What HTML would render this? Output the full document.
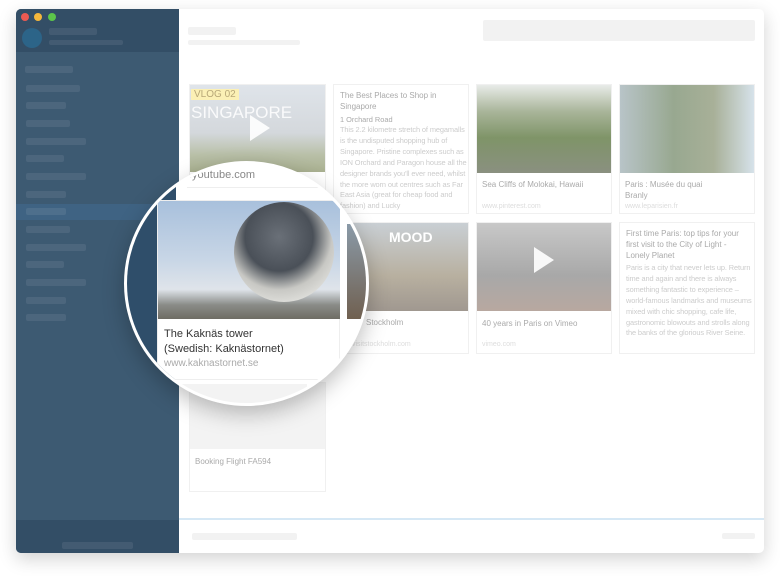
<!DOCTYPE html>
<html><head><meta charset="utf-8"><style>
*{margin:0;padding:0;box-sizing:border-box}
body{width:780px;height:576px;background:#fff;position:relative;overflow:hidden;font-family:"Liberation Sans",sans-serif}
.win{position:absolute;left:16px;top:9px;width:748px;height:544px;border-radius:5px;overflow:hidden;box-shadow:0 6px 18px rgba(0,0,0,.18);background:#fff}
.side{position:absolute;left:0;top:0;width:163px;height:544px;background:#3d5a72}
.sh{position:absolute;left:0;top:0;width:163px;height:43px;background:#334e66}
.sf{position:absolute;left:0;bottom:0;width:163px;height:33px;background:#334e66}
.dot{position:absolute;top:4px;width:8px;height:8px;border-radius:50%}
.bar{position:absolute;background:rgba(255,255,255,.08);border-radius:2px;height:7px}
.g{position:absolute;background:#f2f2f2;border-radius:2px}
.card{position:absolute;border:1px solid #f0f0f0;background:#fff;overflow:hidden}
.img{position:absolute;left:0;top:0;right:0}
.t{position:absolute;font-size:8px;color:#bbb;line-height:11px}
.b{position:absolute;font-size:7.4px;color:#ccc;line-height:10.9px;letter-spacing:-0.1px}
.u{position:absolute;font-size:7px;color:#ddd}
.play{position:absolute;width:0;height:0;border-left:20px solid rgba(255,255,255,.9);border-top:13px solid transparent;border-bottom:13px solid transparent}
.mag{position:absolute;left:124px;top:161px;width:245px;height:245px;border-radius:50%;background:#fff;border:3px solid #fff;box-shadow:0 8px 22px rgba(0,0,0,.25);overflow:hidden}
</style></head><body>
<div class="win">
 <div class="side">
  <div class="sh"></div>
  <div class="dot" style="left:5px;background:#ec5a52"></div>
  <div class="dot" style="left:18px;background:#f4b73c"></div>
  <div class="dot" style="left:32px;background:#5cc54a"></div>
  <div style="position:absolute;left:6px;top:19px;width:20px;height:20px;border-radius:50%;background:#2c6488"></div>
  <div class="bar" style="left:33px;top:19px;width:48px;height:7px"></div>
  <div class="bar" style="left:33px;top:31px;width:74px;height:5px"></div>
  <div class="bar" style="left:9px;top:57px;width:48px"></div>
  <div class="bar" style="left:10px;top:76px;width:54px"></div>
  <div class="bar" style="left:10px;top:93px;width:40px"></div>
  <div class="bar" style="left:10px;top:111px;width:44px"></div>
  <div class="bar" style="left:10px;top:129px;width:60px"></div>
  <div class="bar" style="left:10px;top:146px;width:38px"></div>
  <div class="bar" style="left:10px;top:164px;width:60px"></div>
  <div style="position:absolute;left:0;top:195px;width:163px;height:16px;background:#3f6383"></div>
  <div class="bar" style="left:10px;top:182px;width:40px"></div>
  <div class="bar" style="left:10px;top:199px;width:40px"></div>
  <div class="bar" style="left:10px;top:217px;width:44px"></div>
  <div class="bar" style="left:10px;top:235px;width:60px"></div>
  <div class="bar" style="left:10px;top:252px;width:38px"></div>
  <div class="bar" style="left:10px;top:270px;width:60px"></div>
  <div class="bar" style="left:10px;top:288px;width:40px"></div>
  <div class="bar" style="left:10px;top:305px;width:40px"></div>
  <div class="sf"></div>
  <div class="bar" style="left:46px;top:533px;width:71px"></div>
 </div>
 <div class="g" style="left:172px;top:18px;width:48px;height:8px"></div>
 <div class="g" style="left:172px;top:31px;width:112px;height:5px"></div>
 <div class="g" style="left:467px;top:11px;width:272px;height:21px"></div>
 <div style="position:absolute;left:163px;top:509px;width:585px;height:2px;background:#d6e8f5"></div>
 <div class="g" style="left:176px;top:524px;width:105px;height:7px"></div>
 <div class="g" style="left:706px;top:524px;width:33px;height:6px"></div>
</div>

<div class="card" style="left:189px;top:84px;width:137px;height:130px">
 <div class="img" style="height:87px;background:linear-gradient(180deg,#dfe4ea 0%,#d4d8dc 55%,#b9c0a8 80%,#a9b090 100%)"></div>
 <div style="position:absolute;left:1px;top:4px;background:#fbf0b5;color:#b8a878;font-size:10px;padding:0 3px">VLOG 02</div>
 <div style="position:absolute;left:1px;top:18px;color:rgba(255,255,255,.85);font-size:17px">SINGAPORE</div>
 <div class="play" style="left:60px;top:30px"></div>
 <div class="u" style="left:3px;top:92px;color:#aaa;font-size:10px">.youtube.com</div>
</div>
<div class="card" style="left:333px;top:84px;width:136px;height:130px">
 <div class="t" style="left:6px;top:5px;width:124px;color:#aaa">The Best Places to Shop in Singapore</div>
 <div class="t" style="left:6px;top:29px;font-size:7.4px;color:#aaa">1 Orchard Road</div>
 <div class="b" style="left:6px;top:40px;width:130px">This 2.2 kilometre stretch of megamalls is the undisputed shopping hub of Singapore. Pristine complexes such as ION Orchard and Paragon house all the designer brands you'll ever need, whilst the more worn out centres such as Far East Asia (great for cheap food and fashion) and Lucky</div>
</div>
<div class="card" style="left:476px;top:84px;width:136px;height:130px">
 <div class="img" style="height:88px;background:linear-gradient(180deg,#e8ebe8 0%,#a9b59a 30%,#7f9468 60%,#8a9080 100%)"></div>
 <div class="t" style="left:5px;top:94px;color:#aaa">Sea Cliffs of Molokai, Hawaii</div>
 <div class="u" style="left:5px;top:118px">www.pinterest.com</div>
</div>
<div class="card" style="left:619px;top:84px;width:136px;height:130px">
 <div class="img" style="height:88px;background:linear-gradient(90deg,#b8c4c8 0%,#98a890 40%,#a8b098 70%,#d6e2ea 100%)"></div>
 <div class="t" style="left:5px;top:94px;color:#aaa">Paris : Musée du quai<br>Branly</div>
 <div class="u" style="left:5px;top:118px">www.leparisien.fr</div>
</div>
<div class="card" style="left:333px;top:222px;width:136px;height:132px">
 <div class="img" style="height:88px;background:linear-gradient(180deg,#c9cfd4 0%,#b8b0a0 60%,#a09890 100%)"></div>
 <div style="position:absolute;left:55px;top:6px;color:#fff;font-size:14px;font-weight:bold">MOOD</div>
 <div class="t" style="left:32px;top:94px;color:#aaa">Stockholm</div>
 <div class="u" style="left:18px;top:118px">visitstockholm.com</div>
</div>
<div class="card" style="left:476px;top:222px;width:136px;height:132px">
 <div class="img" style="height:88px;background:linear-gradient(180deg,#c8c8c8 0%,#a8a8a8 60%,#b8a8a0 100%)"></div>
 <div class="play" style="left:57px;top:24px"></div>
 <div class="t" style="left:5px;top:95px;color:#aaa">40 years in Paris on Vimeo</div>
 <div class="u" style="left:5px;top:118px">vimeo.com</div>
</div>
<div class="card" style="left:619px;top:222px;width:136px;height:132px">
 <div class="t" style="left:6px;top:5px;width:126px;color:#aaa">First time Paris: top tips for your first visit to the City of Light - Lonely Planet</div>
 <div class="b" style="left:6px;top:40px;width:128px">Paris is a city that never lets up. Return time and again and there is always something fantastic to experience – world-famous landmarks and museums mixed with chic shopping, cafe life, gastronomic blowouts and strolls along the banks of the glorious River Seine.</div>
</div>
<div class="card" style="left:189px;top:382px;width:137px;height:110px">
 <div class="img" style="height:66px;background:#f3f3f3"></div>
 <div class="t" style="left:5px;top:73px;color:#aaa">Booking Flight FA594</div>
</div>

<div class="mag">
 <div style="position:absolute;left:0;top:0;width:100%;height:100%;background:#fff"></div>
 <div style="position:absolute;left:-1px;top:0;width:50px;height:240px;background:#2f4e6a"></div>
 <div style="position:absolute;left:62px;top:5px;font-size:11px;color:#888">.youtube.com</div>
 <div style="position:absolute;left:60px;top:23px;width:145px;height:1px;background:#eee"></div>
 <div style="position:absolute;left:30px;top:36px;width:183px;height:180px;background:#fff;border:1px solid #eee"></div>
 <div style="position:absolute;left:31px;top:37px;width:182px;height:118px;background:linear-gradient(180deg,#a8c0dc 0%,#c8d6e6 50%,#dfe4ea 75%,#8a8c88 88%,#6e6c64 100%)"></div>
 <div style="position:absolute;left:107px;top:38px;width:100px;height:100px;border-radius:50%;background:radial-gradient(circle at 45% 35%,#6a7078 0%,#4a5058 40%,#c8c8c4 62%,#e0e0dc 80%,#9a9a98 100%)"></div>
 <div style="position:absolute;left:37px;top:163px;font-size:11px;color:#333;line-height:15px">The Kaknäs tower<br>(Swedish: Kaknästornet)</div>
 <div style="position:absolute;left:37px;top:194px;font-size:10px;color:#aaa">www.kaknastornet.se</div>
 <div style="position:absolute;left:220px;top:60px;width:30px;height:95px;background:linear-gradient(180deg,#8a9aa8,#706050)"></div>
 <div style="position:absolute;left:40px;top:220px;width:140px;height:30px;background:#f3f3f3"></div>
</div>
</body></html>
